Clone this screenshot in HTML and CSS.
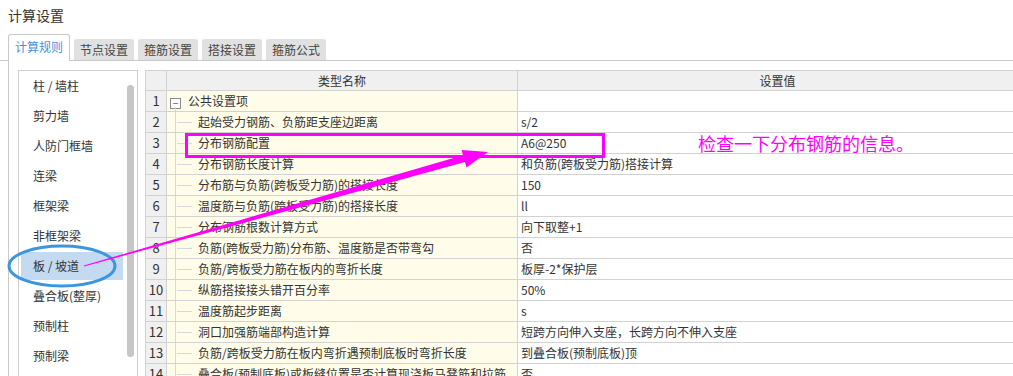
FILE: index.html
```html
<!DOCTYPE html>
<html lang="zh-CN">
<head>
    <meta charset="UTF-8">
    <title>计算设置</title>
    <link rel="stylesheet" href="styles.css">
</head>
<body>
    <div class="title">计算设置</div>
    <div class="tabs">
        <div class="tab active">计算规则</div>
        <div class="tab">节点设置</div>
        <div class="tab">箍筋设置</div>
        <div class="tab">搭接设置</div>
        <div class="tab">箍筋公式</div>
    </div>
    <div class="tab-body">
        <div class="side">
            <ul class="side-list">
                <li>柱 / 墙柱</li>
                <li>剪力墙</li>
                <li>人防门框墙</li>
                <li>连梁</li>
                <li>框架梁</li>
                <li>非框架梁</li>
                <li class="selected">板 / 坡道</li>
                <li>叠合板(整厚)</li>
                <li>预制柱</li>
                <li>预制梁</li>
            </ul>
            <div class="scrollbar"><div class="thumb"></div></div>
        </div>
        <div class="grid">
            <div class="cell head"></div>
            <div class="cell head">类型名称</div>
            <div class="cell head">设置值</div>

            <div class="cell num">1</div>
            <div class="cell name group"><span class="toggle">−</span>公共设置项</div>
            <div class="cell val"></div>

            <div class="cell num">2</div>
            <div class="cell name child">起始受力钢筋、负筋距支座边距离</div>
            <div class="cell val">s/2</div>

            <div class="cell num">3</div>
            <div class="cell name child">分布钢筋配置</div>
            <div class="cell val">A6@250</div>

            <div class="cell num">4</div>
            <div class="cell name child">分布钢筋长度计算</div>
            <div class="cell val">和负筋(跨板受力筋)搭接计算</div>

            <div class="cell num">5</div>
            <div class="cell name child">分布筋与负筋(跨板受力筋)的搭接长度</div>
            <div class="cell val">150</div>

            <div class="cell num">6</div>
            <div class="cell name child">温度筋与负筋(跨板受力筋)的搭接长度</div>
            <div class="cell val">ll</div>

            <div class="cell num">7</div>
            <div class="cell name child">分布钢筋根数计算方式</div>
            <div class="cell val">向下取整+1</div>

            <div class="cell num">8</div>
            <div class="cell name child">负筋(跨板受力筋)分布筋、温度筋是否带弯勾</div>
            <div class="cell val">否</div>

            <div class="cell num">9</div>
            <div class="cell name child">负筋/跨板受力筋在板内的弯折长度</div>
            <div class="cell val">板厚-2*保护层</div>

            <div class="cell num">10</div>
            <div class="cell name child">纵筋搭接接头错开百分率</div>
            <div class="cell val">50%</div>

            <div class="cell num">11</div>
            <div class="cell name child">温度筋起步距离</div>
            <div class="cell val">s</div>

            <div class="cell num">12</div>
            <div class="cell name child">洞口加强筋端部构造计算</div>
            <div class="cell val">短跨方向伸入支座，长跨方向不伸入支座</div>

            <div class="cell num">13</div>
            <div class="cell name child">负筋/跨板受力筋在板内弯折遇预制底板时弯折长度</div>
            <div class="cell val">到叠合板(预制底板)顶</div>

            <div class="cell num">14</div>
            <div class="cell name child">叠合板(预制底板)或板缝位置是否计算现浇板马凳筋和拉筋</div>
            <div class="cell val">否</div>
        </div>
    </div>

    <!-- annotation layer drawn over the dialog -->
    <svg class="marks" width="1013" height="376" viewBox="0 0 1013 376">
        <ellipse cx="62" cy="266" rx="53" ry="20" fill="none" stroke="#3a96df" stroke-width="3"/>
        <rect x="186.5" y="134.5" width="417" height="22" fill="none" stroke="#f0f" stroke-width="3"/>
        <polygon fill="#f0f" points="83.9,265.5 463,155.3 461.6,150 488,152 466.4,167.4 465,162.1 84.1,266.5"/>
    </svg>
    <div class="note">检查一下分布钢筋的信息。</div>
</body>
</html>
```

FILE: styles.css
```css
body {
    margin: 0;
    width: 1013px;
    height: 376px;
    overflow: hidden;
    position: relative;
    background: #fff;
    color: #333;
    font-family: "Noto Sans CJK SC", "Liberation Sans", sans-serif;
    font-size: 12px;
}

.title {
    height: 35px;
    box-sizing: border-box;
    padding: 7px 0 0 8px;
    font-size: 14px;
    line-height: 16px;
}

.tabs {
    display: flex;
    align-items: flex-end;
    gap: 4px;
    height: 25px;
    padding-left: 8px;
    border-bottom: 1px solid #c9c9c9;
}

.tab {
    width: 60px;
    height: 21px;
    line-height: 21px;
    text-align: center;
    background: #e1e1e1;
    border-radius: 3px 3px 0 0;
    color: #444;
}

.tab.active {
    width: 60px;
    height: 26px;
    line-height: 24px;
    margin-bottom: -1px;
    background: #fff;
    border: 1px solid #c9c9c9;
    border-bottom: none;
    color: #4a8fde;
}

.tab-body {
    display: flex;
    gap: 7px;
    margin-left: 8px;
    padding: 9px 0 0 9px;
    border-left: 1px solid #c9c9c9;
    height: 320px;
}

.side {
    display: flex;
    width: 118px;
    flex: 0 0 auto;
    border: 1px solid #cfcfcf;
    background: #fff;
}

.side-list {
    display: flex;
    flex-direction: column;
    list-style: none;
    margin: 0;
    padding: 0 0 0 2px;
    flex: 1;
}

.side-list li {
    height: 28px;
    line-height: 28px;
    margin: 1px 0;
    padding-left: 12px;
    color: #333;
}

.side-list li.selected {
    background: #c3daf1;
}

.scrollbar {
    width: 7px;
    padding: 14px 3px 0 4px;
}

.thumb {
    height: 272px;
    border-radius: 4px;
    background: #c6c6c6;
}

.grid {
    display: grid;
    grid-template-columns: 21px 351px 520px;
    grid-auto-rows: 21px;
    grid-template-rows: 20px;
    align-content: start;
    border-top: 1px solid #d2d2d2;
    border-left: 1px solid #d2d2d2;
    flex: 0 0 auto;
}

.cell {
    border-right: 1px solid #d2d2d2;
    border-bottom: 1px solid #d2d2d2;
    line-height: 20px;
    white-space: nowrap;
    overflow: hidden;
    position: relative;
}

.cell.head {
    background: #f0f0f0;
    text-align: center;
    line-height: 19px;
}

.cell.num {
    background: #f0f0f0;
    text-align: center;
    font-size: 13px;
}

.cell.name {
    background: #fffde9;
    padding-left: 31px;
}

.cell.name.group {
    padding-left: 3px;
}

.cell.val {
    padding-left: 3px;
}

.toggle {
    display: inline-block;
    width: 9px;
    height: 9px;
    line-height: 8px;
    border: 1px solid #8a8a8a;
    margin-right: 7px;
    font-size: 10px;
    text-align: center;
    vertical-align: -1px;
    color: #555;
    background: #fff;
}

.cell.name.group::before {
    content: "";
    position: absolute;
    left: 8px;
    top: 16px;
    bottom: 0;
    border-left: 1px solid #d8d8d8;
}

.cell.name.child::before {
    content: "";
    position: absolute;
    left: 8px;
    top: 0;
    bottom: 0;
    border-left: 1px solid #d8d8d8;
}

.cell.name.child::after {
    content: "";
    position: absolute;
    left: 10px;
    width: 15px;
    top: 10px;
    border-top: 1px solid #d8d8d8;
}

.marks {
    position: absolute;
    left: 0;
    top: 0;
    pointer-events: none;
}

.note {
    position: absolute;
    left: 698px;
    top: 133px;
    font-size: 18px;
    line-height: 20px;
    color: #f0f;
}
```
